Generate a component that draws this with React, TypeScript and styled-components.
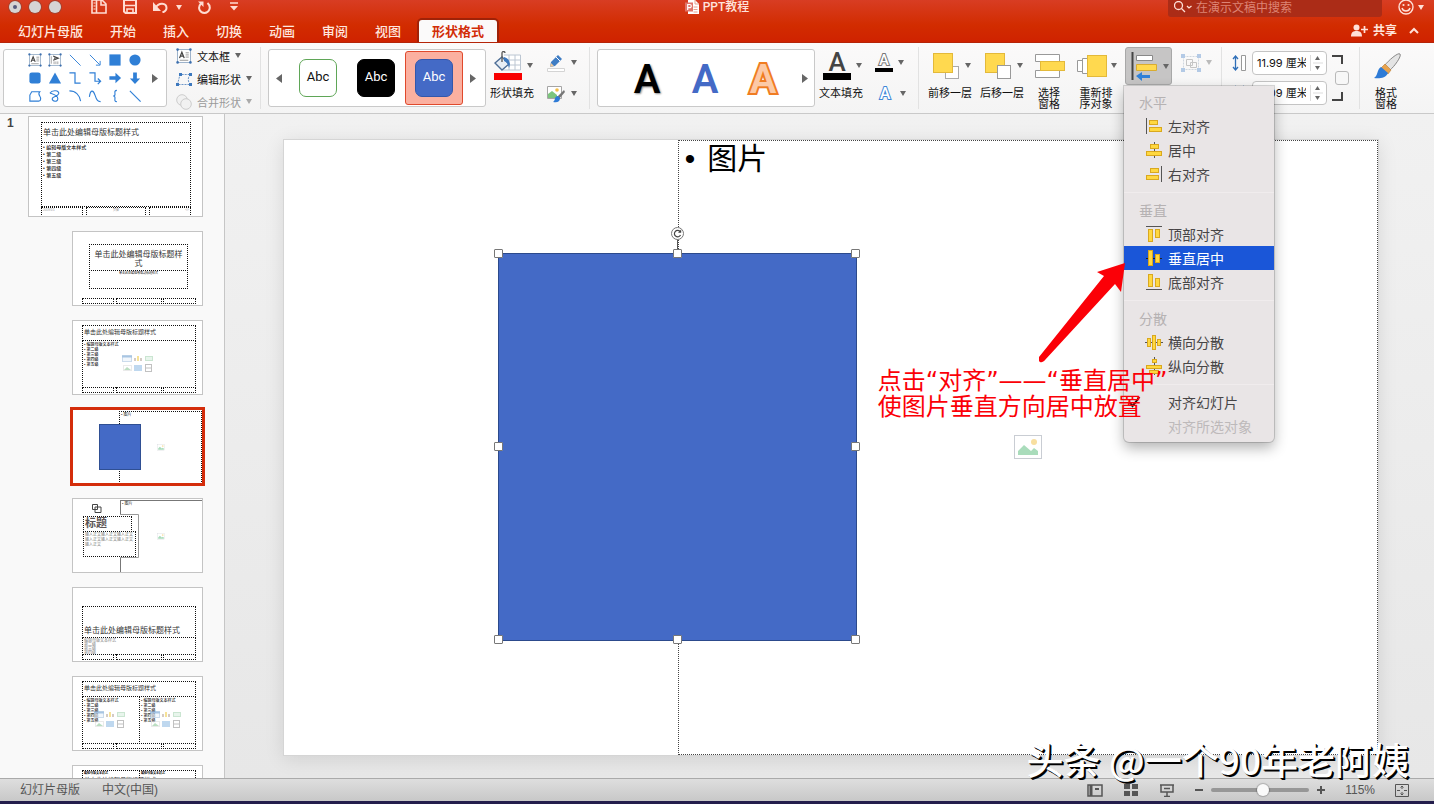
import React from 'react';
import styled, { createGlobalStyle } from 'styled-components';

const UI_FONT = '"Liberation Sans", "Noto Sans CJK SC", sans-serif';
const CJK_FONT = '"Noto Sans CJK SC", sans-serif';

const GlobalStyle = createGlobalStyle`
  * { box-sizing: border-box; }
  html, body { margin: 0; padding: 0; }
  body { font-family: ${UI_FONT}; font-size: 12px; color: #111; overflow: hidden; }
  button { font: inherit; color: inherit; background: none; border: 0; padding: 0; margin: 0; }
  svg { display: block; flex: none; }
`;

/* ---------- window frame ---------- */

const Window = styled.div`
  position: relative;
  display: flex;
  flex-direction: column;
  height: 100vh;
  overflow: hidden;
`;

const Header = styled.header`
  background: linear-gradient(#d83d23, #d22c00 60%, #cf2200);
  border-bottom: 1px solid #b52408;
  color: #ffe4dc;
`;

const TitleBar = styled.div`
  display: grid;
  grid-template-columns: 1fr auto 1fr;
  grid-template-rows: 100%;
  height: 17px;
`;

const TitleLeft = styled.div`
  display: flex;
  align-items: center;
  gap: 16px;
  padding: 0 0 3px 9px;
`;

const Lights = styled.div`
  display: flex;
  gap: 8px;
  width: 66px;
`;

const Light = styled.button<{ $dot?: boolean }>`
  display: flex;
  align-items: center;
  justify-content: center;
  width: 12px;
  height: 12px;
  border-radius: 6px;
  background: #d6d4d4;
  box-shadow: 0 0 0 1px #a8402c;
  &::after {
    content: '';
    width: 4px;
    height: 4px;
    border-radius: 2px;
    background: ${(p) => (p.$dot ? '#55597c' : 'transparent')};
  }
`;

const IconButton = styled.button`
  display: flex;
  align-items: center;
  gap: 8px;
`;

const DocTitle = styled.h1`
  display: flex;
  align-items: center;
  gap: 4px;
  margin: 0;
  padding-bottom: 3px;
  font: 500 12px/14px Roboto, ${CJK_FONT};
`;

const TitleRight = styled.div`
  display: flex;
  justify-content: flex-end;
  gap: 16px;
  padding-right: 10px;
`;

const SearchBox = styled.label`
  display: flex;
  align-items: center;
  gap: 4px;
  width: 214px;
  padding: 0 6px 3px;
  border-radius: 0 0 3px 3px;
  background: #ab2c17;
`;

const SearchInput = styled.input`
  flex: 1;
  min-width: 0;
  height: 14px;
  padding: 0;
  border: 0;
  outline: 0;
  background: none;
  font: 12px/14px ${CJK_FONT};
  color: #fff;
  &::placeholder { color: #dd8475; opacity: 1; }
`;

const FaceButton = styled(IconButton)`
  gap: 4px;
  padding-bottom: 3px;
`;

const TabRow = styled.nav`
  display: flex;
  align-items: flex-end;
  gap: 1px;
  height: 25px;
  padding: 0 15px 0 5px;
`;

const Tab = styled.button<{ $active?: boolean }>`
  height: 22px;
  padding: 0 13px;
  margin-left: ${(p) => (p.$active ? '4px' : '0')};
  font: 500 13px/22px ${CJK_FONT};
  font-weight: ${(p) => (p.$active ? 700 : 500)};
  color: ${(p) => (p.$active ? '#d22d08' : '#ffe6df')};
  background: ${(p) => (p.$active ? '#fbfafa' : 'transparent')};
  border-radius: 3px 3px 0 0;
  box-shadow: ${(p) => (p.$active ? '0 0 0 2px #9e2208' : 'none')};
  clip-path: inset(-2px -2px 0 -2px);
`;

const ShareArea = styled.div`
  display: flex;
  align-items: center;
  gap: 12px;
  height: 24px;
  margin-left: auto;
  font: 700 12px/24px ${CJK_FONT};
`;

const ShareButton = styled(IconButton)`
  gap: 5px;
`;

/* ---------- ribbon ---------- */

const Ribbon = styled.section`
  display: flex;
  align-items: stretch;
  flex: none;
  height: 71px;
  padding: 4px 0 4px 3px;
  background: linear-gradient(#fbfafa, #f4f4f4);
  border-bottom: 1px solid #c9c9c9;
  font-size: 11px;
`;

const Divider = styled.div`
  flex: none;
  width: 1px;
  margin: 0 5px 0 0;
  background: #e2e2e2;
`;

const Gallery = styled.div<{ $w: number }>`
  display: flex;
  flex: none;
  align-items: center;
  width: ${(p) => p.$w}px;
  height: 58px;
  margin: 2px 0 0 2px;
  border: 1px solid #c9c9c9;
  border-radius: 3px;
  background: #fff;
`;

const ShapeGallery = styled(Gallery)`
  margin-left: 0;
  padding-left: 21px;
`;

const ShapeGrid = styled.div`
  display: grid;
  grid-template-columns: repeat(6, 20px);
  grid-template-rows: repeat(3, 18px);
`;

const ShapeButton = styled.button`
  display: flex;
  align-items: center;
  justify-content: center;
`;

const ScrollButton = styled.button`
  display: flex;
  align-items: center;
  justify-content: center;
  width: 20px;
  height: 54px;
`;

const CommandList = styled.div`
  display: flex;
  flex-direction: column;
  flex: none;
  width: 93px;
  padding-left: 9px;
`;

const Command = styled.button`
  display: flex;
  flex: none;
  align-items: center;
  gap: 5px;
  height: 23px;
  margin-top: -3px;
  font: 11px/22px ${CJK_FONT};
  & + & { margin-top: 0; }
  &:disabled { color: #9a9a9a; }
`;

const StyleSwatch = styled.button<{ $selected?: boolean }>`
  display: flex;
  align-items: center;
  justify-content: center;
  width: 58px;
  height: 54px;
  border: 1px solid ${(p) => (p.$selected ? '#e0492c' : 'transparent')};
  border-radius: 3px;
  background: ${(p) => (p.$selected ? '#fbb0a0' : 'transparent')};
`;

const SwatchFace = styled.span<{ $fill: string; $line: string; $ink: string }>`
  width: 38px;
  height: 38px;
  border: 1px solid ${(p) => p.$line};
  border-radius: 7px;
  background: ${(p) => p.$fill};
  color: ${(p) => p.$ink};
  font: 13px/34px Roboto, sans-serif;
`;

const ArtButton = styled.button<{ $ink: string; $stroke?: string; $shadow?: boolean }>`
  width: 58px;
  font: 600 40px/54px Roboto, sans-serif;
  color: ${(p) => p.$ink};
  paint-order: stroke fill;
  -webkit-text-stroke: ${(p) => (p.$stroke ? `4px ${p.$stroke}` : '0')};
  text-shadow: ${(p) => (p.$shadow ? '1px 1px 2px #888' : 'none')};
`;

const ArtList = styled.div`
  display: flex;
  padding: 4px 0 0 20px;
  margin-right: 3px;
`;

const Tool = styled.button<{ $w?: number }>`
  display: flex;
  flex-direction: column;
  flex: none;
  width: ${(p) => p.$w || 52}px;
  font: 11px/11px ${CJK_FONT};
`;

const ToolIcon = styled.span`
  display: flex;
  flex: none;
  align-items: center;
  gap: 4px;
  height: 37px;
  margin-bottom: 3px;
  padding-left: 7px;
`;

const IconSlot = styled.span`
  display: flex;
  justify-content: center;
  width: 30px;
`;

const ToolLabel = styled.span`
  display: block;
  width: 100%;
  white-space: pre-line;
  text-align: center;
`;

const MiniColumn = styled.div`
  display: flex;
  flex-direction: column;
  flex: none;
  width: 51px;
  padding-left: 8px;
`;

const MiniButton = styled.button`
  display: flex;
  align-items: center;
  gap: 5px;
  height: 31px;
`;

const LetterIcon = styled.span<{ $size: number; $ink: string; $stroke?: string; $bar?: number }>`
  display: block;
  width: ${(p) => p.$bar || 20}px;
  border-bottom: ${(p) => (p.$bar ? `${p.$bar > 20 ? 7 : 4}px solid #000` : '0')};
  font: 500 ${(p) => p.$size}px/${(p) => (p.$bar && p.$bar > 20 ? 21 : 15)}px Roboto, sans-serif;
  color: ${(p) => p.$ink};
  paint-order: stroke fill;
  -webkit-text-stroke: ${(p) => (p.$stroke ? `2px ${p.$stroke}` : '0')};
  text-align: center;
`;

const AlignWrap = styled.div`
  position: relative;
  flex: none;
  margin: 0 9px 0 3px;
`;

const AlignButton = styled.button`
  display: flex;
  align-items: center;
  gap: 4px;
  width: 47px;
  height: 38px;
  padding-left: 5px;
  border: 1px solid #a8a8a8;
  border-radius: 3px;
  background: #c6c5c5;
`;

const GroupButton = styled(MiniButton)`
  width: 40px;
  flex: none;
`;

const SizeFields = styled.div`
  display: flex;
  flex-direction: column;
  gap: 6px;
  padding: 4px 0 0 5px;
`;

const Field = styled.label`
  display: grid;
  grid-template-columns: 20px 75px;
  align-items: center;
  height: 24px;
`;

const Spinner = styled.span`
  display: flex;
  height: 24px;
  border: 1px solid #c4c4c4;
  border-radius: 4px;
  background: #fff;
`;

const SpinnerInput = styled.input`
  width: 57px;
  padding: 0 4px;
  border: 0;
  outline: 0;
  background: none;
  font: 11px/22px Inter, ${CJK_FONT};
  color: #111;
`;

const Lock = styled.label`
  display: flex;
  flex-direction: column;
  align-items: flex-start;
  gap: 7px;
  width: 32px;
  padding: 8px 0 0 5px;
`;

const LockBox = styled.input`
  appearance: none;
  width: 14px;
  height: 14px;
  margin: 0 0 0 3px;
  border: 1px solid #b9b9b9;
  border-radius: 3px;
  background: #f7f7f7;
`;

/* ---------- drop-down menu ---------- */

const Menu = styled.div`
  position: absolute;
  top: 39px;
  left: -1px;
  z-index: 10;
  width: 150px;
  padding: 4px 0;
  border-radius: 0 0 5px 5px;
  background: #e9e5e6;
  box-shadow: 0 0 0 1px rgba(0, 0, 0, 0.15), 0 6px 14px rgba(0, 0, 0, 0.3);
  font: 14px/24px ${CJK_FONT};
`;

const MenuSection = styled.div`
  & + & { border-top: 1px solid #f0eced; margin-top: 6px; padding-top: 5px; }
`;

const MenuHeading = styled.div`
  height: 24px;
  padding-left: 15px;
  color: #b6b2b3;
`;

const MenuItem = styled.button<{ $active?: boolean }>`
  display: grid;
  grid-template-columns: 18px 1fr;
  gap: 5px;
  align-items: center;
  width: 100%;
  height: 24px;
  padding-left: 21px;
  text-align: left;
  color: ${(p) => (p.$active ? '#fff' : '#474546')};
  background: ${(p) => (p.$active ? '#1a56d8' : 'transparent')};
  &:disabled { color: #bdb9ba; }
`;

const Check = styled.svg`
  position: absolute;
  left: 4px;
  top: 310px;
`;

/* ---------- body ---------- */

const Body = styled.main`
  display: flex;
  flex: 1;
  min-height: 0;
`;

const Sidebar = styled.aside`
  display: flex;
  justify-content: space-between;
  flex: none;
  width: 225px;
  padding: 2px 21px 0 7px;
  border-right: 1px solid #c6c6c6;
  background: #f9f9f9;
  overflow: hidden;
`;

const SlideNumber = styled.span`
  font: 700 12px/14px ${UI_FONT};
  color: #444;
`;

const ThumbList = styled.div`
  display: flex;
  flex-direction: column;
  align-items: flex-end;
  gap: 14px;
`;

const Thumb = styled.div<{ $master?: boolean; $selected?: boolean }>`
  position: relative;
  flex: none;
  width: ${(p) => (p.$master ? 175 : 131)}px;
  height: ${(p) => (p.$master ? 101 : 75)}px;
  overflow: hidden;
  border: 1px solid ${(p) => (p.$selected ? '#fff' : '#c4c4c4')};
  outline: ${(p) => (p.$selected ? '3px solid #d42d0b' : 'none')};
  outline-offset: -1px;
  background: #fff;
`;

type BoxProps = { $x: number; $y: number; $w: number; $h: number };

type HolderProps = BoxProps & {
  $size?: number;
  $align?: string;
  $ink?: string;
  $bold?: boolean;
  $solid?: boolean;
  $v?: 'center' | 'flex-end';
};

const Holder = styled.div<HolderProps>`
  position: absolute;
  left: ${(p) => p.$x}px;
  top: ${(p) => p.$y}px;
  width: ${(p) => p.$w}px;
  height: ${(p) => p.$h}px;
  padding: 1px;
  display: flex;
  flex-direction: column;
  justify-content: ${(p) => p.$v || 'flex-start'};
  border: 1px ${(p) => (p.$solid ? 'solid #777' : 'dotted #111')};
  font-family: ${UI_FONT};
  font-size: ${(p) => p.$size || 5}px;
  font-weight: ${(p) => (p.$bold ? 700 : 400)};
  line-height: 1.2;
  text-align: ${(p) => p.$align || 'left'};
  color: ${(p) => p.$ink || '#333'};
`;

const Bullets = styled.div<{ $step: number; $ink?: string }>`
  font: 500 ${(p) => (p.$step > 6 ? 5 : 4)}px/${(p) => p.$step}px ${UI_FONT};
  color: ${(p) => p.$ink || '#222'};
`;

const MiniShape = styled.div<BoxProps>`
  position: absolute;
  left: ${(p) => p.$x}px;
  top: ${(p) => p.$y}px;
  width: ${(p) => p.$w}px;
  height: ${(p) => p.$h}px;
`;

const MiniBlue = styled(MiniShape)`
  border: 1px solid #2f4f93;
  background: #446ac6;
`;

const Canvas = styled.section`
  flex: 1;
  min-width: 0;
  padding: 25px 55px 0 58px;
  background: linear-gradient(#f1f1f1, #e7e7e7);
`;

const Slide = styled.div`
  position: relative;
  width: 100%;
  aspect-ratio: 16 / 9;
  border: 1px solid #d5d5d5;
  background: #fff;
  box-shadow: 0 3px 18px rgba(0, 0, 0, 0.1);
`;

const PictureHolder = styled.div`
  position: absolute;
  left: 36%;
  right: 0;
  top: 0;
  bottom: 0;
  display: flex;
  align-items: center;
  justify-content: center;
  border: 1px dotted #444;
`;

const SlideText = styled.p`
  position: absolute;
  left: 6px;
  top: 0;
  display: flex;
  gap: 12px;
  margin: 0;
  font: 30px/36px ${UI_FONT};
  color: #000;
`;

const BlueShape = styled.div`
  position: absolute;
  left: 19.6%;
  top: 18.4%;
  width: 32.8%;
  height: 63.1%;
  border: 1px solid #2c4a8c;
  background: #446ac6;
`;

const Handle = styled.span<{ $x: number; $y: number }>`
  position: absolute;
  left: ${(p) => p.$x}%;
  top: ${(p) => p.$y}%;
  width: 9px;
  height: 9px;
  margin: -5px 0 0 -5px;
  border: 1px solid #777;
  border-radius: 1px;
  background: #fff;
`;

const Rotate = styled.span`
  position: absolute;
  left: 50%;
  top: -27px;
  margin-left: -7px;
`;

const Note = styled.p`
  position: absolute;
  left: 54%;
  top: 228px;
  z-index: 20;
  margin: 0;
  padding-left: 3px;
  white-space: nowrap;
  font: 24px/26px "DejaVu Sans", ${CJK_FONT};
  color: #fb0007;
`;

const NoteArrow = styled.svg`
  position: absolute;
  left: 69%;
  top: 123px;
  z-index: 20;
`;

/* ---------- status bar ---------- */

const Status = styled.footer`
  display: flex;
  align-items: center;
  flex: none;
  gap: 22px;
  height: 26px;
  padding: 0 25px 0 20px;
  border-top: 1px solid #aaa;
  border-bottom: 3px solid #231d4c;
  background: linear-gradient(#dedede, #c8c8c8);
  font: 12px/22px ${UI_FONT};
  color: #555;
`;

const StatusRight = styled.div`
  display: flex;
  align-items: center;
  gap: 20px;
  margin-left: auto;
`;

const Zoom = styled.div`
  display: flex;
  align-items: center;
  gap: 8px;
`;

const ZoomRange = styled.input`
  appearance: none;
  width: 98px;
  height: 4px;
  margin: 0;
  border-radius: 2px;
  background: #979797;
  &::-webkit-slider-thumb {
    appearance: none;
    width: 12px;
    height: 12px;
    border-radius: 6px;
    background: #fafafa;
    box-shadow: 0 0 1px 1px rgba(0, 0, 0, 0.2);
  }
`;

const Watermark = styled.div`
  position: absolute;
  right: 25px;
  bottom: 19px;
  z-index: 30;
  font: 37px/52px ${CJK_FONT};
  font-weight: 500;
  color: #fff;
  text-shadow: 1px 1px 0 #000, 2px 2px 0 #000;
  white-space: nowrap;
`;

/* ---------- icons ---------- */

const Caret = ({ color = '#666' }: { color?: string }) => (
  <svg width="6" height="5" viewBox="0 0 6 5"><path d="M0 0h6L3 5z" fill={color} /></svg>
);

const Side = ({ left }: { left?: boolean }) => (
  <svg width="6" height="9" viewBox="0 0 6 9"><path d={left ? 'M6 0v9L0 4.500z' : 'M0 0v9l6-4.500z'} fill="#666" /></svg>
);

const B = '#2f7fd6';
const shapePaths: { name: string; art: React.ReactNode }[] = [
  { name: '文本框', art: <TextBoxArt /> },
  { name: '竖排文本框', art: <g transform="rotate(90 7 7)"><TextBoxArt /></g> },
  { name: '直线', art: <path d="M1.500 1.500L13 13" stroke={B} fill="none" /> },
  { name: '箭头', art: <path d="M1.500 1.500L12 12M12.500 8v4.500H8" stroke={B} fill="none" /> },
  { name: '矩形', art: <rect x="1" y="1" width="12" height="12" fill={B} /> },
  { name: '椭圆', art: <circle cx="7" cy="7" r="6" fill={B} /> },
  { name: '圆角矩形', art: <rect x="1" y="1" width="12" height="12" rx="2.500" fill={B} /> },
  { name: '三角形', art: <path d="M7 1l6.500 12H.5z" fill={B} /> },
  { name: '肘形连接符', art: <path d="M1 1.500h6v11h6" stroke={B} fill="none" strokeWidth="1.300" /> },
  { name: '肘形箭头', art: <path d="M1 1.500h6v9h5M10 7.500l3 3-3 3" stroke={B} fill="none" strokeWidth="1.300" /> },
  { name: '右箭头', art: <path d="M1 5h6.500V1.500L13.500 7l-6 5.500V9H1z" fill={B} /> },
  { name: '下箭头', art: <path d="M5 1v6.500H1.500L7 13.500l5.500-6H9V1z" fill={B} /> },
  { name: '任意多边形', art: <path d="M3.500 2.500H12c-3 3 2 5 1 8q0 2-2 2H1.500V6z" stroke={B} fill="none" strokeWidth="1.200" /> },
  { name: '自由曲线', art: <path d="M1.500 4C4 0 12 1 11 4.500S4 7 4 10s6 4 6 0-5-5-8-6" stroke={B} fill="none" strokeWidth="1.200" /> },
  { name: '弧形', art: <path d="M1 1.500c7 0 11 5 12 11" stroke={B} fill="none" strokeWidth="1.200" /> },
  { name: '曲线', art: <path d="M1 8c1-8 4-8 6-2s3 7 6 7" stroke={B} fill="none" strokeWidth="1.200" /> },
  { name: '左大括号', art: <path d="M9 1C6 1 7 3 7 5S6 7 5 7c1 0 2 .5 2 2s-1 4 2 4" stroke={B} fill="none" strokeWidth="1.200" /> },
  { name: '线条', art: <path d="M1.500 1.500L13 13" stroke={B} fill="none" strokeWidth="1.200" /> },
];

function TextBoxArt() {
  return (
    <g>
      <rect x="1" y="1" width="12" height="12" fill="#fff" stroke="#8aa4c0" strokeWidth=".8" />
      <path d="M2.800 9L5 3.500 7.200 9M3.600 7.200h2.800" stroke="#444" strokeWidth="1.200" fill="none" />
      <path d="M8.500 4h3M8.500 6h3M8.500 8h3M3 11h8" stroke="#888" strokeWidth=".8" />
      {[[1, 1], [13, 1], [1, 13], [13, 13]].map(([x, y]) => (
        <circle key={`${x}-${y}`} cx={x} cy={y} r="1.200" fill="#3c6fae" />
      ))}
    </g>
  );
}

const Bars = ({ kind }: { kind: string }) => {
  const y = { fill: '#ffd840', stroke: '#d9a81e', strokeWidth: 1 };
  const l = { stroke: '#555', strokeWidth: 1 };
  return (
    <svg width="18" height="18" viewBox="0 0 18 18">
      {kind === 'left' && <><path d="M1.500 1v16" {...l} /><rect x="4.500" y="3.500" width="8" height="4" {...y} /><rect x="4.500" y="10.500" width="12" height="4" {...y} /></>}
      {kind === 'center' && <><path d="M9.500 1v16" {...l} /><rect x="5.500" y="3.500" width="8" height="4" {...y} /><rect x="1.500" y="10.500" width="15" height="4" {...y} /></>}
      {kind === 'right' && <><path d="M16.500 1v16" {...l} /><rect x="5.500" y="3.500" width="8" height="4" {...y} /><rect x="1.500" y="10.500" width="12" height="4" {...y} /></>}
      {kind === 'top' && <><path d="M1 1.500h16" {...l} /><rect x="3.500" y="4.500" width="4" height="12" {...y} /><rect x="10.500" y="4.500" width="4" height="8" {...y} /></>}
      {kind === 'middle' && <><path d="M1 9.500h16" stroke="#222" /><rect x="3.500" y="1.500" width="4" height="15" {...y} /><rect x="10.500" y="5.500" width="4" height="8" {...y} /></>}
      {kind === 'bottom' && <><path d="M1 16.500h16" {...l} /><rect x="3.500" y="1.500" width="4" height="12" {...y} /><rect x="10.500" y="5.500" width="4" height="8" {...y} /></>}
      {kind === 'horizontal' && <><path d="M0 9.500h18" {...l} /><rect x="2.500" y="5.500" width="3" height="8" {...y} /><rect x="7.500" y="2.500" width="3" height="14" {...y} /><rect x="12.500" y="6.500" width="3" height="6" {...y} /></>}
      {kind === 'vertical' && <><path d="M9.500 0v18" {...l} /><rect x="7.500" y="2.500" width="4" height="3" {...y} /><rect x="1.500" y="8.500" width="15" height="3" {...y} /><rect x="4.500" y="13.500" width="9" height="3" {...y} /></>}
    </svg>
  );
};

const ContentIcons = () => (
  <svg width="32" height="17" viewBox="0 0 32 17" opacity=".6">
    <rect x=".5" y=".5" width="9" height="6" fill="#eaf3fb" stroke="#a9c4e0" /><path d="M0 1.500h10" stroke="#6f9fd0" strokeWidth="2" />
    <path d="M12 6V3h2v3zM18 6V3h2v3z" fill="#b9aaa0" /><path d="M15 6V1h2v5z" fill="#f3cf52" />
    <rect x="23.500" y="1.500" width="7" height="4" fill="#d9efe0" stroke="#a8d4b4" />
    <rect x="1.500" y="10.500" width="8" height="5" fill="#fff" stroke="#ddd" /><path d="M2 15l3-3 4 3z" fill="#8fc99b" />
    <rect x="12" y="10" width="8" height="6" fill="#95bfe6" />
    <rect x="23.500" y="9.500" width="6" height="7" fill="none" stroke="#999" /><path d="M24 13h6" stroke="#999" />
  </svg>
);

const PictureGlyph = ({ w }: { w: number }) => (
  <svg width={w} height={w * 24 / 28} viewBox="0 0 28 24">
    <rect x=".5" y=".5" width="27" height="23" fill="#fff" stroke="#c9cdd3" />
    <circle cx="20" cy="7" r="3" fill="#f8dfa0" />
    <path d="M4 20v-4l6-6 7 6 3-3 4 3v4z" fill="#a9dcbb" />
  </svg>
);

/* ---------- thumbnails ---------- */

const TITLE = '单击此处编辑母版标题样式';

const BodyLines = ({ step }: { step: number }) => (
  <Bullets $step={step}>
    {['编辑母版文本样式', '第二级', '第三级', '第四级', '第五级'].map((t) => <div key={t}>• {t}</div>)}
  </Bullets>
);

const Footers = () => (
  <>
    <Holder $x={9} $y={66} $w={32} $h={6} />
    <Holder $x={43} $y={66} $w={46} $h={6} />
    <Holder $x={90} $y={66} $w={33} $h={6} />
  </>
);

const Thumbnails = () => (
  <ThumbList>
    <Thumb $master>
      <Holder $x={12} $y={5} $w={150} $h={21} $size={8} $v="center">{TITLE}</Holder>
      <Holder $x={12} $y={25} $w={150} $h={65}><BodyLines step={7} /></Holder>
      <Holder $x={12} $y={90} $w={42} $h={10} $size={3} $ink="#999">2019/1/1</Holder>
      <Holder $x={57} $y={90} $w={60} $h={10} $size={3} $ink="#999" $align="center">页脚</Holder>
      <Holder $x={120} $y={90} $w={42} $h={10} $size={3} $ink="#999" $align="right">‹#›</Holder>
    </Thumb>
    <Thumb>
      <Holder $x={16} $y={12} $w={99} $h={27} $size={8} $align="center" $v="flex-end">{TITLE}</Holder>
      <Holder $x={16} $y={38} $w={99} $h={19} $size={3} $align="center" $ink="#111">单击此处编辑母版副标题样式</Holder>
      <Footers />
    </Thumb>
    <Thumb>
      <Holder $x={9} $y={4} $w={114} $h={16} $size={6} $v="center">{TITLE}</Holder>
      <Holder $x={9} $y={19} $w={114} $h={48}><BodyLines step={5} /></Holder>
      <MiniShape $x={49} $y={34} $w={32} $h={17}><ContentIcons /></MiniShape>
      <Footers />
    </Thumb>
    <Thumb $selected>
      <Holder $x={46} $y={1} $w={83} $h={73} $size={4}>• 图片</Holder>
      <MiniBlue $x={26} $y={14} $w={42} $h={46} />
      <MiniShape $x={84} $y={34} $w={9} $h={8}><PictureGlyph w={8} /></MiniShape>
    </Thumb>
    <Thumb>
      <Holder $x={47} $y={1} $w={90} $h={80} $size={4} $solid>• 图片</Holder>
      <MiniShape $x={46} $y={15} $w={20} $h={44}>
        <svg width="20" height="44" viewBox="0 0 20 44"><path d="M0 0h20v44H0z" fill="#fff" /><path d="M1 .5h18.500v43H1" stroke="#999" fill="none" /></svg>
      </MiniShape>
      <MiniShape $x={19} $y={5} $w={10} $h={9}>
        <svg width="10" height="9" viewBox="0 0 10 9"><path d="M.5.5h5v5h-5zM3 3h6v5.500H3z" stroke="#444" fill="none" /></svg>
      </MiniShape>
      <Holder $x={10} $y={17} $w={49} $h={16} $size={11} $ink="#5d5555" $bold $v="center">标题</Holder>
      <Holder $x={10} $y={32} $w={53} $h={26} $size={4} $ink="#777">输入正文输入正文输入正文输入正文输入正文输入正文输入正文</Holder>
      <MiniShape $x={84} $y={34} $w={9} $h={8}><PictureGlyph w={8} /></MiniShape>
    </Thumb>
    <Thumb>
      <Holder $x={9} $y={18} $w={114} $h={32} $size={8} $v="flex-end">{TITLE}</Holder>
      <Holder $x={9} $y={49} $w={114} $h={18}>
        <Bullets $step={4} $ink="#999"><div>编辑母版文本样式</div><div>第二级</div><div>第三级</div><div>第四级</div></Bullets>
      </Holder>
      <Footers />
    </Thumb>
    <Thumb>
      <Holder $x={9} $y={4} $w={114} $h={16} $size={6} $v="center">{TITLE}</Holder>
      <Holder $x={9} $y={19} $w={58} $h={48}><BodyLines step={5} /></Holder>
      <Holder $x={66} $y={19} $w={57} $h={48}><BodyLines step={5} /></Holder>
      <MiniShape $x={21} $y={34} $w={32} $h={17}><ContentIcons /></MiniShape>
      <MiniShape $x={77} $y={34} $w={32} $h={17}><ContentIcons /></MiniShape>
      <Footers />
    </Thumb>
    <Thumb>
      <Holder $x={9} $y={4} $w={58} $h={48} $size={3} $ink="#000" $bold>编辑母版文本样式</Holder>
      <Holder $x={66} $y={4} $w={57} $h={48} $size={3} $ink="#000" $bold>编辑母版文本样式</Holder>
      <Holder $x={9} $y={4} $w={114} $h={16} $size={6} $v="flex-end">{TITLE}</Holder>
    </Thumb>
  </ThumbList>
);

/* ---------- app ---------- */

const tabs = ['幻灯片母版', '开始', '插入', '切换', '动画', '审阅', '视图', '形状格式'];

const Stepper = () => (
  <svg width="15" height="22" viewBox="0 0 15 22">
    <path d="M.5 3v16M3 11h10" stroke="#ddd" />
    <path d="M5 8l2.500-4L10 8zM5 14l2.500 4L10 14z" fill="#666" />
  </svg>
);

export default function App() {
  return (
    <Window>
      <GlobalStyle />
      <Header>
        <TitleBar>
          <TitleLeft>
            <Lights>
              <Light $dot aria-label="关闭" /><Light aria-label="最小化" /><Light aria-label="全屏" />
            </Lights>
            <IconButton aria-label="新建">
              <svg width="16" height="14" viewBox="0 0 16 14"><path d="M1 0v13h14V4l-4-4zM5.500 0v13M10 0v5h5" fill="none" stroke="#ffdcd2" strokeWidth="1.600" /><path d="M2.500 3h2M2.500 6h2M2.500 9h2" stroke="#ffdcd2" /></svg>
            </IconButton>
            <IconButton aria-label="保存">
              <svg width="14" height="14" viewBox="0 0 14 14"><path d="M1 0v11.500L2.500 13H13V0z" fill="none" stroke="#ffdcd2" strokeWidth="2" /><path d="M1 5.500h12M4 13V9h6v4" fill="none" stroke="#ffdcd2" strokeWidth="1.600" /></svg>
            </IconButton>
            <IconButton aria-label="撤消">
              <svg width="15" height="12" viewBox="0 0 15 12"><path d="M2.500 7c3-6 11-5.500 11 0 0 2-1.500 3.500-4 4.500" fill="none" stroke="#ffdcd2" strokeWidth="2" /><path d="M0 1v9h8z" fill="#ffdcd2" /></svg>
              <Caret color="#ffdcd2" />
            </IconButton>
            <IconButton aria-label="恢复">
              <svg width="13" height="14" viewBox="0 0 13 14"><path d="M3 3.500C-1 8 2 13 6.500 13S14 7 9.500 3" fill="none" stroke="#ffdcd2" strokeWidth="2" /><path d="M0 1.500h5.500V7z" fill="#ffdcd2" /></svg>
            </IconButton>
            <IconButton aria-label="自定义">
              <svg width="14" height="10" viewBox="0 0 14 10"><path d="M3 1h8" stroke="#ffdcd2" strokeWidth="1.500" /><path d="M3 4h8L7 8.500z" fill="#ffdcd2" /></svg>
            </IconButton>
          </TitleLeft>
          <DocTitle>
            <svg width="14" height="14" viewBox="0 0 14 14"><path d="M3 0h7l4 4v10H3z" fill="#fff" /><path d="M10 0v4h4M8.500 7h4M8.500 9.500h4M8.500 12h4" stroke="#e6a08f" fill="none" /><rect y="2.500" width="8" height="9" fill="#e0746a" /><path d="M2.700 10V4.500h2a1.500 1.500 0 010 3.200h-2" stroke="#fff" strokeWidth="1.200" fill="none" /></svg>
            PPT教程
          </DocTitle>
          <TitleRight>
            <SearchBox>
              <svg width="18" height="12" viewBox="0 0 18 12"><circle cx="4.500" cy="4.500" r="4" fill="none" stroke="#ffe0d8" strokeWidth="1.300" /><path d="M7.500 7.500L11 11M13 5l2 2 2.500-2" stroke="#ffe0d8" strokeWidth="1.300" fill="none" /></svg>
              <SearchInput placeholder="在演示文稿中搜索" aria-label="在演示文稿中搜索" />
            </SearchBox>
            <FaceButton aria-label="反馈">
              <svg width="16" height="16" viewBox="0 0 16 16"><circle cx="8" cy="8" r="7" fill="none" stroke="#ffe0d8" strokeWidth="1.400" /><circle cx="5.500" cy="6" r="1.100" fill="#ffe0d8" /><circle cx="10.500" cy="6" r="1.100" fill="#ffe0d8" /><path d="M4 9c1 4 7 4 8 0" fill="none" stroke="#ffe0d8" strokeWidth="1.400" /></svg>
              <Caret color="#ffe0d8" />
            </FaceButton>
          </TitleRight>
        </TitleBar>
        <TabRow>
          {tabs.map((t) => <Tab key={t} $active={t === '形状格式'}>{t}</Tab>)}
          <ShareArea>
            <ShareButton>
              <svg width="17" height="13" viewBox="0 0 17 13"><circle cx="5.500" cy="3.500" r="3" fill="#ffe0d8" /><path d="M0 12.500C0 8 2.500 7 5.500 7S11 8 11 12.500z" fill="#ffe0d8" /><path d="M13.500 2v7M10 5.500h7" stroke="#ffe0d8" strokeWidth="1.700" /></svg>
              共享
            </ShareButton>
            <IconButton aria-label="折叠功能区">
              <svg width="10" height="7" viewBox="0 0 10 7"><path d="M1 6l4-4 4 4" fill="none" stroke="#ffe0d8" strokeWidth="2" /></svg>
            </IconButton>
          </ShareArea>
        </TabRow>
      </Header>

      <Ribbon>
        <ShapeGallery $w={164}>
          <ShapeGrid>
            {shapePaths.map((s) => (
              <ShapeButton key={s.name} aria-label={s.name}>
                <svg width="14" height="14" viewBox="-.5 -.5 15 15">{s.art}</svg>
              </ShapeButton>
            ))}
          </ShapeGrid>
          <ScrollButton aria-label="更多形状"><Side /></ScrollButton>
        </ShapeGallery>
        <CommandList>
          <Command>
            <svg width="16" height="16" viewBox="-.5 -.5 15 15"><TextBoxArt /></svg>文本框<Caret />
          </Command>
          <Command>
            <svg width="16" height="14" viewBox="0 0 16 14"><path d="M1.500 12.500L4 2.500h10.500c-3 3-3 7 0 10z" fill="none" stroke="#6d96c8" strokeDasharray="2 1" /><g fill="#3c78be"><path d="M0 11h3v3H0zM3 1h3v3H3zM13 1h3v3h-3zM13 11h3v3h-3z" /></g></svg>编辑形状<Caret />
          </Command>
          <Command disabled>
            <svg width="16" height="16" viewBox="0 0 16 16"><circle cx="6" cy="6" r="5.300" fill="#f1f1f1" stroke="#ccc" /><circle cx="10" cy="10" r="5.300" fill="#f1f1f1" stroke="#ccc" /></svg>合并形状<Caret color="#aaa" />
          </Command>
        </CommandList>
        <Divider />
        <Gallery $w={218}>
          <ScrollButton aria-label="上一个样式"><Side left /></ScrollButton>
          <StyleSwatch><SwatchFace $fill="#fff" $line="#5fa657" $ink="#111">Abc</SwatchFace></StyleSwatch>
          <StyleSwatch><SwatchFace $fill="#000" $line="#000" $ink="#fff">Abc</SwatchFace></StyleSwatch>
          <StyleSwatch $selected><SwatchFace $fill="#446ac6" $line="#3357ab" $ink="#fff">Abc</SwatchFace></StyleSwatch>
          <ScrollButton aria-label="下一个样式"><Side /></ScrollButton>
        </Gallery>
        <Tool>
          <ToolIcon>
            <IconSlot>
              <svg width="28" height="30" viewBox="0 0 28 30"><path d="M10 4h16.500v15H9M15 4v15M21 4v15M10 9h16M10 14h16" fill="#fff" stroke="#bcc6d2" /><path d="M1 12l7-6 7 7-7 6z" fill="#e8eef5" stroke="#4e6e96" strokeWidth="1.400" /><path d="M8 11V2c0-2 3-2 3 0" fill="none" stroke="#555" strokeWidth="1.300" /><path d="M10 6c5 1 7 6 5 11-1-4-2-6-5-7z" fill="#3c78be" /><path d="M0 22h28v7H0z" fill="#f80000" /></svg>
            </IconSlot>
            <Caret />
          </ToolIcon>
          <ToolLabel>形状填充</ToolLabel>
        </Tool>
        <MiniColumn>
          <MiniButton aria-label="形状轮廓">
            <svg width="20" height="18" viewBox="0 0 20 18"><path d="M4 13l1-5 7-7 4 4-7 7z" fill="#3f7dc4" /><path d="M4 13l1-4 3 3z" fill="#f0c99a" /><path d="M10 3l4 4" stroke="#fff" /><path d="M1.500 14.500h17v3h-17z" fill="#fff" stroke="#d4d4d4" /></svg>
            <Caret />
          </MiniButton>
          <MiniButton aria-label="形状效果">
            <svg width="20" height="18" viewBox="0 0 20 18"><path d="M1.500 1.500h14v12h-14z" fill="#fff" stroke="#a5a5a5" /><path d="M2 13V9l4-3 5 4v3z" fill="#7cc57d" /><circle cx="11" cy="5" r="1.800" fill="#f4bf4a" /><path d="M18 5l-7 7 2 2 6-7z" fill="#777" /><path d="M12 11c-4 0-2 4-5 6 4 1 7 0 7-4z" fill="#2e7bd6" /></svg>
            <Caret />
          </MiniButton>
        </MiniColumn>
        <Divider />
        <Gallery $w={218}>
          <ArtList>
            <ArtButton $ink="#000" $shadow>A</ArtButton>
            <ArtButton $ink="#446ac6">A</ArtButton>
            <ArtButton $ink="#fcc9a6" $stroke="#f07c22">A</ArtButton>
          </ArtList>
          <ScrollButton aria-label="更多艺术字"><Side /></ScrollButton>
        </Gallery>
        <Tool>
          <ToolIcon>
            <IconSlot><LetterIcon $size={26} $ink="#444" $bar={28}>A</LetterIcon></IconSlot>
            <Caret />
          </ToolIcon>
          <ToolLabel>文本填充</ToolLabel>
        </Tool>
        <MiniColumn>
          <MiniButton aria-label="文本轮廓"><LetterIcon $size={15} $ink="#fff" $stroke="#777" $bar={18}>A</LetterIcon><Caret /></MiniButton>
          <MiniButton aria-label="文本效果"><LetterIcon $size={16} $ink="#fff" $stroke="#3f87d8">A</LetterIcon><Caret /></MiniButton>
        </MiniColumn>
        <Divider />
        <Tool>
          <ToolIcon>
            <IconSlot><svg width="28" height="28" viewBox="0 0 28 28"><rect x="13.500" y="14.500" width="13" height="12" fill="#fff" stroke="#aaa" /><rect x="1.500" y="1.500" width="19" height="19" fill="#ffd94f" stroke="#e3b93a" /></svg></IconSlot>
            <Caret />
          </ToolIcon>
          <ToolLabel>前移一层</ToolLabel>
        </Tool>
        <Tool>
          <ToolIcon>
            <IconSlot><svg width="28" height="28" viewBox="0 0 28 28"><rect x="1.500" y="1.500" width="19" height="19" fill="#ffd94f" stroke="#e3b93a" /><rect x="13.500" y="13.500" width="13" height="13" fill="#fff" stroke="#999" /></svg></IconSlot>
            <Caret />
          </ToolIcon>
          <ToolLabel>后移一层</ToolLabel>
        </Tool>
        <Tool $w={42}>
          <ToolIcon>
            <IconSlot><svg width="30" height="26" viewBox="0 0 30 26"><path d="M.5 1.500h24v7H.5zM.5 17.500h24v7H.5z" fill="#fff" stroke="#999" /><rect x="5.500" y="8.500" width="24" height="9" fill="#ffd94f" stroke="#e3b93a" /></svg></IconSlot>
          </ToolIcon>
          <ToolLabel>{'选择\n窗格'}</ToolLabel>
        </Tool>
        <Tool>
          <ToolIcon>
            <IconSlot><svg width="30" height="24" viewBox="0 0 30 24"><path d="M.5 6.500h8v11h-8z" fill="#fff" stroke="#999" /><path d="M5.500 4.500h8v15h-8z" fill="#fff" stroke="#999" /><rect x="10.500" y="1.500" width="19" height="21" fill="#ffd94f" stroke="#e3b93a" /></svg></IconSlot>
            <Caret />
          </ToolIcon>
          <ToolLabel>{'重新排\n序对象'}</ToolLabel>
        </Tool>
        <AlignWrap>
          <AlignButton aria-label="对齐" aria-haspopup="menu">
            <svg width="28" height="30" viewBox="0 0 28 30"><path d="M1.500 1v28" stroke="#444" strokeWidth="2" /><path d="M5.500 4.500h16v5h-16z" fill="#fff" stroke="#888" /><path d="M5.500 13.500h20v6h-20z" fill="#ffd94f" stroke="#d9ac30" /><path d="M5 25l6-4v3h8v3h-8v3z" fill="#2f80d8" /></svg>
            <Caret />
          </AlignButton>
          <Menu role="menu">
            <MenuSection>
              <MenuHeading>水平</MenuHeading>
              <MenuItem role="menuitem"><Bars kind="left" />左对齐</MenuItem>
              <MenuItem role="menuitem"><Bars kind="center" />居中</MenuItem>
              <MenuItem role="menuitem"><Bars kind="right" />右对齐</MenuItem>
            </MenuSection>
            <MenuSection>
              <MenuHeading>垂直</MenuHeading>
              <MenuItem role="menuitem"><Bars kind="top" />顶部对齐</MenuItem>
              <MenuItem role="menuitem" $active><Bars kind="middle" />垂直居中</MenuItem>
              <MenuItem role="menuitem"><Bars kind="bottom" />底部对齐</MenuItem>
            </MenuSection>
            <MenuSection>
              <MenuHeading>分散</MenuHeading>
              <MenuItem role="menuitem"><Bars kind="horizontal" />横向分散</MenuItem>
              <MenuItem role="menuitem"><Bars kind="vertical" />纵向分散</MenuItem>
            </MenuSection>
            <MenuSection>
              <MenuItem role="menuitem"><span />对齐幻灯片</MenuItem>
              <MenuItem role="menuitem" disabled><span />对齐所选对象</MenuItem>
            </MenuSection>
            <Check width="14" height="12" viewBox="0 0 14 12"><path d="M1.500 6l3 4 7-9" fill="none" stroke="#111" strokeWidth="2" /></Check>
          </Menu>
        </AlignWrap>
        <GroupButton disabled aria-label="组合">
          <svg width="20" height="18" viewBox="0 0 20 18" opacity=".65"><path d="M2.500 2.500h15v13h-15z" fill="none" stroke="#b8c4d2" strokeDasharray="2 1" /><path d="M5.500 5.500h6v6h-6zM9.500 8.500h6v5h-6z" fill="none" stroke="#aaa" /><g fill="#8fb2dc"><path d="M0 0h4v4H0zM16 0h4v4h-4zM0 14h4v4H0zM16 14h4v4h-4z" /></g></svg>
          <Caret color="#bbb" />
        </GroupButton>
        <Divider />
        <SizeFields>
          <Field>
            <svg width="15" height="16" viewBox="0 0 15 16"><path d="M3.500 1v14M1 4l2.500-3L6 4M1 12l2.500 3L6 12" fill="none" stroke="#2f6fb8" strokeWidth="1.300" /><path d="M9.500.5h4v15h-4z" fill="#fff" stroke="#999" /></svg>
            <Spinner><SpinnerInput aria-label="高度" defaultValue="11.99 厘米" /><Stepper /></Spinner>
          </Field>
          <Field>
            <svg width="15" height="16" viewBox="0 0 15 16"><path d="M1 3.500h13M4 1L1 3.500 4 6M11 1l3 2.500L11 6" fill="none" stroke="#2f6fb8" strokeWidth="1.300" /></svg>
            <Spinner><SpinnerInput aria-label="宽度" defaultValue="11.09 厘米" /><Stepper /></Spinner>
          </Field>
        </SizeFields>
        <Lock>
          <svg width="11" height="9" viewBox="0 0 11 9"><path d="M0 1h10v8" fill="none" stroke="#444" strokeWidth="2" /></svg>
          <LockBox type="checkbox" aria-label="锁定纵横比" />
          <svg width="11" height="9" viewBox="0 0 11 9"><path d="M0 8h10V0" fill="none" stroke="#444" strokeWidth="2" /></svg>
        </Lock>
        <Divider />
        <Tool $w={42}>
          <ToolIcon>
            <IconSlot><svg width="28" height="26" viewBox="0 0 28 26"><path d="M27 1c2 2-6 13-10 16l-5-5C15 8 25-1 27 1z" fill="#e4e4e4" stroke="#888" /><path d="M12 11l6 6-3 4-7-6z" fill="#e8a34e" stroke="#b87a33" strokeWidth=".6" /><path d="M8 14l7 6c-2 5-9 6-14 5 4-2 3-9 7-11z" fill="#2e7bd6" /></svg></IconSlot>
          </ToolIcon>
          <ToolLabel>{'格式\n窗格'}</ToolLabel>
        </Tool>
      </Ribbon>

      <Body>
        <Sidebar>
          <SlideNumber>1</SlideNumber>
          <Thumbnails />
        </Sidebar>
        <Canvas>
          <Slide>
            <PictureHolder>
              <SlideText><span>•</span><span>图片</span></SlideText>
              <PictureGlyph w={28} />
            </PictureHolder>
            <BlueShape>
              <Rotate>
                <svg width="13" height="27" viewBox="0 0 13 27"><path d="M6.500 12v15" stroke="#555" /><circle cx="6.500" cy="6.500" r="6" fill="#fff" stroke="#777" /><path d="M9 4.500A3.200 3.200 0 109.500 8" fill="none" stroke="#444" strokeWidth="1.200" /><path d="M10.200 2.500v3.300H7z" fill="#444" /></svg>
              </Rotate>
              {[[0, 0], [50, 0], [100, 0], [0, 50], [100, 50], [0, 100], [50, 100], [100, 100]].map(([x, y]) => (
                <Handle key={`${x}-${y}`} $x={x} $y={y} />
              ))}
            </BlueShape>
            <NoteArrow width="90" height="102" viewBox="0 0 90 102">
              <path d="M86 0L58 9l7 4L0 94c-2 5 3 7 6 3L76 21l6 8z" fill="#fb0007" />
            </NoteArrow>
            <Note>点击“对齐”——“垂直居中”<br />使图片垂直方向居中放置</Note>
          </Slide>
        </Canvas>
      </Body>

      <Status>
        <span>幻灯片母版</span>
        <span>中文(中国)</span>
        <StatusRight>
          <IconButton aria-label="普通视图"><svg width="16" height="13" viewBox="0 0 16 13"><path d="M1 1h14v11H1z" fill="none" stroke="#555" strokeWidth="1.500" /><path d="M4 1v11" stroke="#555" strokeWidth="3" /><path d="M8 5h4" stroke="#555" strokeWidth="2" /></svg></IconButton>
          <IconButton aria-label="幻灯片浏览"><svg width="16" height="12" viewBox="0 0 16 12"><path d="M1 0h6v5H1zM9 0h6v5H9zM1 7h6v5H1zM9 7h6v5H9z" fill="#555" /></svg></IconButton>
          <IconButton aria-label="放映"><svg width="16" height="13" viewBox="0 0 16 13"><path d="M1 1h14M2 1v7h12V1M5 4.500h6M8 8v4M5 12.500h6" fill="none" stroke="#555" strokeWidth="1.500" /></svg></IconButton>
          <Zoom>
            <IconButton aria-label="缩小"><svg width="8" height="8" viewBox="0 0 8 8"><path d="M0 4h8" stroke="#555" strokeWidth="2" /></svg></IconButton>
            <ZoomRange type="range" defaultValue={53} aria-label="缩放" />
            <IconButton aria-label="放大"><svg width="8" height="8" viewBox="0 0 8 8"><path d="M0 4h8M4 0v8" stroke="#555" strokeWidth="2" /></svg></IconButton>
          </Zoom>
          <span>115%</span>
          <IconButton aria-label="适应窗口"><svg width="14" height="13" viewBox="0 0 14 13"><path d="M.5.5h13v12H.5z" fill="none" stroke="#555" /><path d="M7 2v3M7 8v3M2 6.500h3M9 6.500h3M5.500 3.500L7 2l1.500 1.500M5.500 9.500L7 11l1.500-1.500" fill="none" stroke="#555" /></svg></IconButton>
        </StatusRight>
      </Status>
      <Watermark>头条 @一个90年老阿姨</Watermark>
    </Window>
  );
}
